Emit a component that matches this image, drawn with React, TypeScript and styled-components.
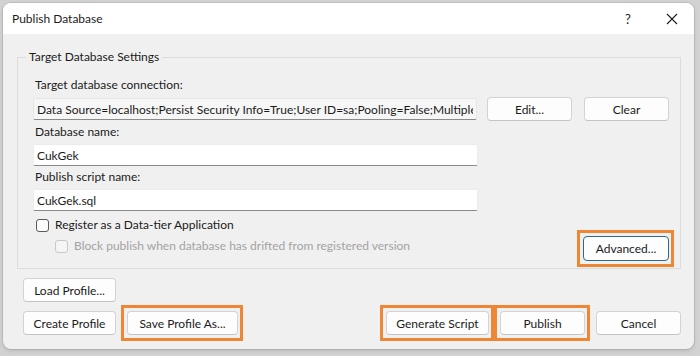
import React from 'react';
import styled, { createGlobalStyle } from 'styled-components';

const GlobalStyle = createGlobalStyle`
  html, body {
    margin: 0;
    padding: 0;
    background: #d2d2d2;
  }
  * {
    box-sizing: border-box;
  }
`;

const Screen = styled.div`
  width: 700px;
  height: 356px;
  padding: 3px 6px 7px 3px;
  font-family: 'Segoe UI', Lato, 'Noto Sans', sans-serif;
  font-size: 12px;
  color: #1b1b1b;
`;

const Window = styled.div`
  height: 100%;
  display: flex;
  flex-direction: column;
  background: #f0f0f0;
  border-radius: 8px;
  overflow: hidden;
  box-shadow: 0 0 0 1px rgba(0, 0, 0, 0.08), 0 2px 4px rgba(0, 0, 0, 0.12);
`;

const TitleBar = styled.div`
  height: 31px;
  flex: none;
  display: flex;
  align-items: center;
  background: #ffffff;
  padding-left: 9px;
`;

const Title = styled.div`
  flex: 1;
`;

const CaptionButton = styled.div`
  width: 44px;
  height: 31px;
  display: flex;
  align-items: center;
  justify-content: center;
  font-size: 13px;
`;

const Body = styled.div`
  flex: 1;
  display: flex;
  flex-direction: column;
  padding: 0 13px 16px 14px;
`;

const GroupBox = styled.fieldset`
  margin: 15px 0 0;
  padding: 0 11px 7px 15px;
  border: 1px solid #dcdcdc;
  min-width: 0;
`;

const Legend = styled.legend`
  margin-left: -7px;
  padding: 0 3px;
  line-height: 16px;
`;

const Label = styled.div<{ $gap: number }>`
  line-height: 16px;
  padding-left: 2px;
  margin-top: ${(p) => p.$gap}px;
`;

const Row = styled.div`
  display: flex;
  align-items: center;
  margin-top: 4px;
`;

const TextBox = styled.input<{ $plain?: boolean }>`
  display: block;
  width: 445px;
  height: 22px;
  padding: 0 3px;
  margin: 0;
  font: inherit;
  color: #1b1b1b;
  outline: none;
  background: ${(p) => (p.$plain ? '#f6f6f6' : '#ffffff')};
  border: 1px solid ${(p) => (p.$plain ? '#e6e6e6' : '#ececec')};
  border-bottom-color: #8a8a8a;
  border-radius: 2px;
`;

const Field = styled(TextBox)`
  margin-top: 4px;
`;

const Button = styled.button<{ $w: number; $accent?: boolean }>`
  width: ${(p) => p.$w}px;
  height: ${(p) => (p.$accent ? 25 : 24)}px;
  padding: 0;
  font: inherit;
  color: #1b1b1b;
  background: #fdfdfd;
  border: 1px solid ${(p) => (p.$accent ? '#2c6a8e' : '#d3d3d3')};
  border-bottom-color: ${(p) => (p.$accent ? '#2c6a8e' : '#c4c4c4')};
  border-radius: 4px;
`;

const ConnButtons = styled.div`
  display: flex;
  gap: 12px;
  margin-left: 10px;
`;

const OptionsRow = styled.div`
  display: flex;
  justify-content: space-between;
  align-items: flex-end;
  margin-top: 6px;
`;

const Checks = styled.div`
  display: flex;
  flex-direction: column;
  gap: 5px;
  margin-bottom: 7px;
`;

const CheckRow = styled.div<{ $indent?: boolean; $disabled?: boolean }>`
  display: flex;
  align-items: center;
  gap: 6px;
  line-height: 16px;
  padding-left: ${(p) => (p.$indent ? 22 : 3)}px;
  color: ${(p) => (p.$disabled ? '#a3a3a3' : '#1b1b1b')};
`;

const Box = styled.span<{ $disabled?: boolean }>`
  width: 13px;
  height: 13px;
  border: 1px solid ${(p) => (p.$disabled ? '#c8c8c8' : '#5a5a5a')};
  border-radius: 3px;
  background: ${(p) => (p.$disabled ? '#f5f5f5' : '#fbfbfb')};
`;

const Highlight = styled.span`
  position: relative;
  display: inline-flex;
  &::after {
    content: '';
    position: absolute;
    inset: -6px -5px -6px -6px;
    border: 3px solid #ef8633;
    pointer-events: none;
  }
`;

const Footer = styled.div`
  display: flex;
  justify-content: space-between;
  align-items: flex-end;
  margin-top: 9px;
  padding-left: 6px;
`;

const FooterLeft = styled.div`
  display: flex;
  flex-direction: column;
  gap: 9px;
`;

const ButtonRow = styled.div`
  display: flex;
  gap: 11px;
`;

const CloseIcon = () => (
  <svg width="12" height="12" viewBox="0 0 12 12">
    <path d="M1 1L11 11M11 1L1 11" stroke="#1b1b1b" strokeWidth="1.1" />
  </svg>
);

const App: React.FC = () => {
  return (
    <Screen>
      <GlobalStyle />
      <Window>
        <TitleBar>
          <Title>Publish Database</Title>
          <CaptionButton>?</CaptionButton>
          <CaptionButton>
            <CloseIcon />
          </CaptionButton>
        </TitleBar>
        <Body>
          <GroupBox>
            <Legend>Target Database Settings</Legend>
            <Label $gap={12}>Target database connection:</Label>
            <Row>
              <TextBox
                $plain
                readOnly
                value="Data Source=localhost;Persist Security Info=True;User ID=sa;Pooling=False;MultipleActiveResultSets=False"
              />
              <ConnButtons>
                <Button $w={85}>Edit...</Button>
                <Button $w={85}>Clear</Button>
              </ConnButtons>
            </Row>
            <Label $gap={3}>Database name:</Label>
            <Field readOnly value="CukGek" />
            <Label $gap={3}>Publish script name:</Label>
            <Field readOnly value="CukGek.sql" />
            <OptionsRow>
              <Checks>
                <CheckRow>
                  <Box />
                  Register as a Data-tier Application
                </CheckRow>
                <CheckRow $indent $disabled>
                  <Box $disabled />
                  Block publish when database has drifted from registered version
                </CheckRow>
              </Checks>
              <Highlight>
                <Button $w={86} $accent>
                  Advanced...
                </Button>
              </Highlight>
            </OptionsRow>
          </GroupBox>
          <Footer>
            <FooterLeft>
              <Button $w={93}>Load Profile...</Button>
              <ButtonRow>
                <Button $w={93}>Create Profile</Button>
                <Highlight>
                  <Button $w={111}>Save Profile As...</Button>
                </Highlight>
              </ButtonRow>
            </FooterLeft>
            <ButtonRow>
              <Highlight>
                <Button $w={103}>Generate Script</Button>
              </Highlight>
              <Highlight>
                <Button $w={85}>Publish</Button>
              </Highlight>
              <Button $w={85}>Cancel</Button>
            </ButtonRow>
          </Footer>
        </Body>
      </Window>
    </Screen>
  );
};

export default App;
